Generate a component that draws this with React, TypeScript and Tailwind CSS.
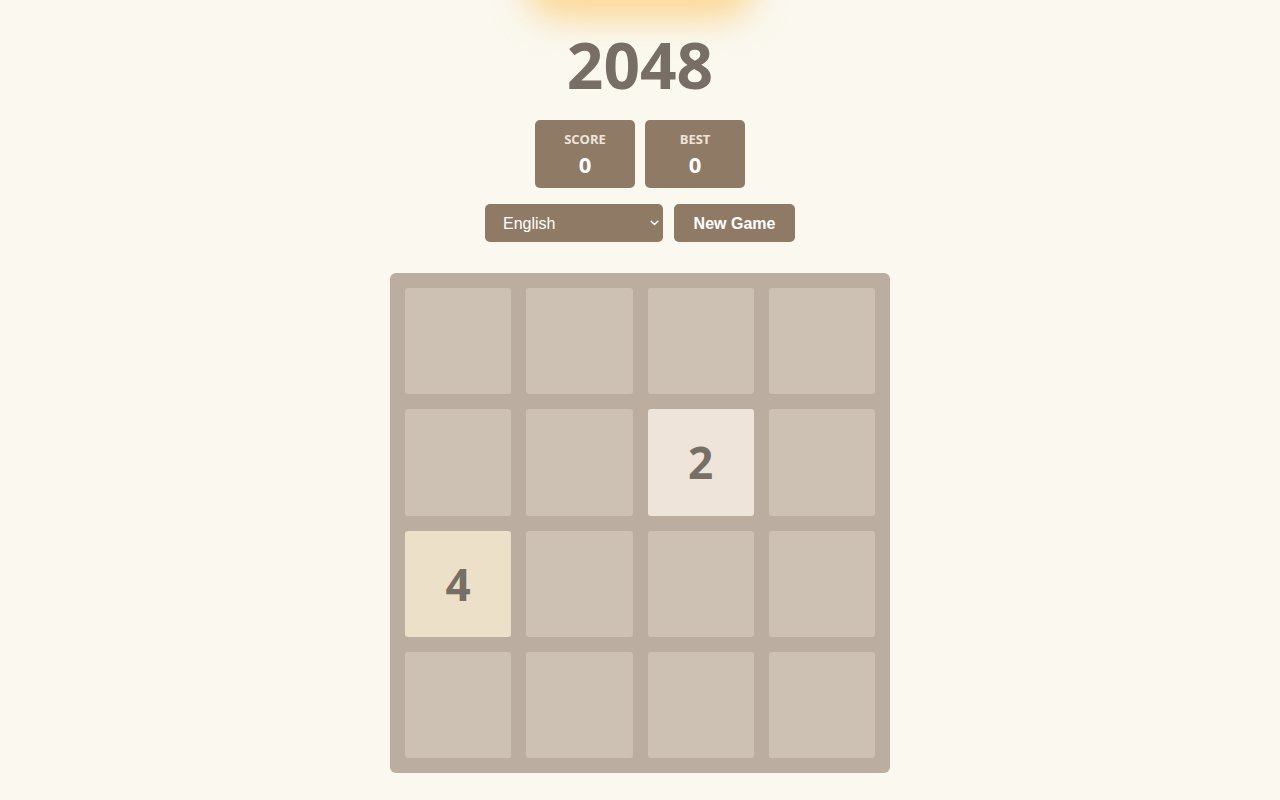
import React from "react";

const board: (number | null)[][] = [
  [null, null, null, null],
  [null, null, 2, null],
  [4, null, null, null],
  [null, null, null, null],
];

function Tile({ v }: { v: number | null }) {
  if (v === 2)
    return (
      <div className="flex items-center justify-center rounded-[3px] bg-[#eee4da] text-[44px] font-bold leading-none text-[#776e65]">
        2
      </div>
    );
  if (v === 4)
    return (
      <div className="flex items-center justify-center rounded-[3px] bg-[#ede0c8] text-[44px] font-bold leading-none text-[#776e65]">
        4
      </div>
    );
  return <div className="rounded-[3px] bg-[#cdc1b4]" />;
}

function ScoreBox({ label, value }: { label: string; value: number }) {
  return (
    <div className="flex h-[68px] w-[100px] flex-col items-center rounded-[5px] bg-[#8f7a66] pt-[11px]">
      <div className="text-[13px] font-bold uppercase leading-[16px] text-[#eee4da]">{label}</div>
      <div className="mt-[3px] text-[22px] font-bold leading-[28px] text-white">{value}</div>
    </div>
  );
}

export default function App() {
  return (
    <div
      className="relative min-h-[800px] w-full overflow-hidden bg-[#faf8ef]"
      style={{ fontFamily: '"Open Sans", "Noto Sans", sans-serif' }}
    >
      <div className="pointer-events-none absolute left-1/2 top-[-50px] h-[70px] w-[230px] -translate-x-1/2 rounded-full bg-[#fbd99a] blur-[16px]" />
      <div className="relative flex flex-col items-center">
        <h1 className="mt-[33px] text-[64px] font-bold leading-[64px] text-[#776e65]">2048</h1>
        <div className="mt-[23px] flex gap-[10px]">
          <ScoreBox label="Score" value={0} />
          <ScoreBox label="Best" value={0} />
        </div>
        <div
          className="mt-[16px] flex gap-[11px]"
          style={{ fontFamily: '"Liberation Sans", Arial, sans-serif' }}
        >
          <div className="relative h-[38px] w-[178px]">
            <select
              defaultValue="en"
              className="h-[38px] w-[178px] appearance-none rounded-[5px] bg-[#8f7a66] pl-[18px] pt-[2px] text-[16px] text-white outline-none"
            >
              <option value="en">English</option>
            </select>
            <svg
              className="pointer-events-none absolute right-[4px] top-[16px]"
              width="9"
              height="6"
              viewBox="0 0 9 6"
              fill="none"
            >
              <path d="M1.2 1.2 L4.5 4.5 L7.8 1.2" stroke="white" strokeWidth="1.5" strokeLinecap="round" strokeLinejoin="round" />
            </svg>
          </div>
          <button className="h-[38px] w-[121px] rounded-[5px] bg-[#8f7a66] pt-[1px] text-[16px] font-bold text-white">
            New Game
          </button>
        </div>
        <div className="mt-[31px] grid h-[500px] w-[500px] grid-cols-4 grid-rows-4 gap-[15px] rounded-[6px] bg-[#bbada0] p-[15px]">
          {board.flat().map((v, i) => (
            <Tile key={i} v={v} />
          ))}
        </div>
      </div>
    </div>
  );
}
